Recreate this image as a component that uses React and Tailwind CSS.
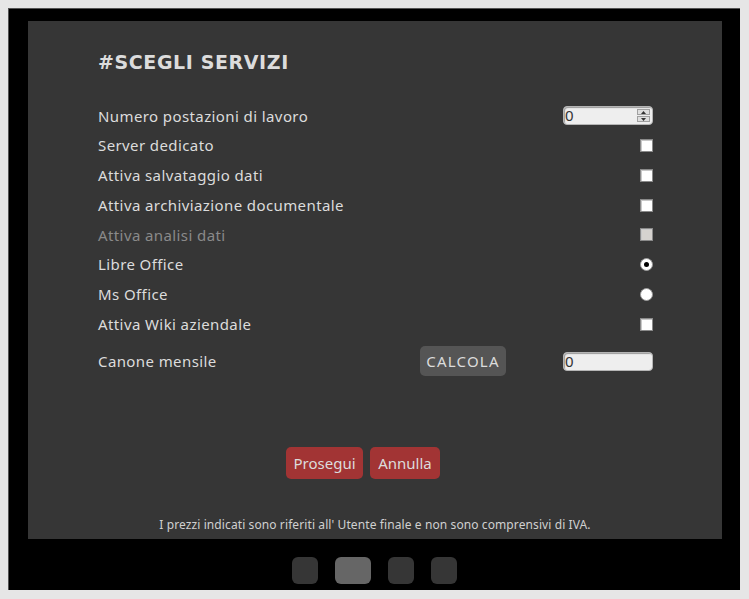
import React from 'react'

const ROWS = [
  { label: 'Numero postazioni di lavoro', type: 'number' },
  { label: 'Server dedicato', type: 'check' },
  { label: 'Attiva salvataggio dati', type: 'check' },
  { label: 'Attiva archiviazione documentale', type: 'check' },
  { label: 'Attiva analisi dati', type: 'check', disabled: true },
  { label: 'Libre Office', type: 'radio', checked: true },
  { label: 'Ms Office', type: 'radio' },
  { label: 'Attiva Wiki aziendale', type: 'check' },
]

function Checkbox({ disabled }) {
  return (
    <span
      className={`block w-[13px] h-[13px] border border-[#8a8a8a] ${
        disabled ? 'bg-[#d6d3cf]' : 'bg-white'
      } shadow-[inset_1px_1px_0_#c8c8c8]`}
    />
  )
}

function Radio({ checked }) {
  return (
    <span className="flex items-center justify-center w-[13px] h-[13px] rounded-full bg-white border border-[#9a9a9a]">
      {checked && <span className="block w-[5px] h-[5px] rounded-full bg-black" />}
    </span>
  )
}

function NumberBox({ spinner }) {
  return (
    <div className="relative w-[90px] h-[19px] bg-[#eeeeee] rounded-[4px] border border-[#b5b5b5] shadow-[inset_1px_1px_1px_#9a9a9a] flex items-center pl-[1px]">
      <span className="text-[15px] leading-none text-[#333]">0</span>
      {spinner && (
        <div className="absolute right-[2px] top-[2px] w-[13px] h-[13px] flex flex-col gap-[1px]">
          <div className="flex-1 bg-[#dedede] border border-[#a0a0a0] flex items-center justify-center">
            <svg width="5" height="3" viewBox="0 0 5 3"><path d="M0 3 L2.5 0 L5 3 Z" fill="#333" /></svg>
          </div>
          <div className="flex-1 bg-[#dedede] border border-[#a0a0a0] flex items-center justify-center">
            <svg width="5" height="3" viewBox="0 0 5 3"><path d="M0 0 L2.5 3 L5 0 Z" fill="#333" /></svg>
          </div>
        </div>
      )}
    </div>
  )
}

export default function App() {
  return (
    <div className="w-[749px] h-[599px] bg-[#e6e6e6] p-[8px] font-['Noto_Sans',sans-serif] overflow-hidden">
      <div className="w-[732px] h-[582px] bg-black border-l border-t border-[#555] flex flex-col">
        <div className="mt-[12px] ml-[19px] w-[694px] h-[518px] bg-[#363636] flex flex-col pl-[70px] pr-[69px]">
          <h1 className="mt-[27px] h-[28px] leading-[28px] text-[19px] tracking-[0.6px] font-bold text-[#dcdcdc] font-['DejaVu_Sans',sans-serif]">
            #SCEGLI SERVIZI
          </h1>

          <div className="mt-[25px] flex flex-col">
            {ROWS.map((r) => (
              <div key={r.label} className="h-[29.75px] flex items-center justify-between">
                <span
                  className={`text-[15px] tracking-[0.4px] ${r.disabled ? 'text-[#8a8a8a]' : 'text-[#dcdcdc]'}`}
                >
                  {r.label}
                </span>
                {r.type === 'number' && <NumberBox spinner />}
                {r.type === 'check' && <Checkbox disabled={r.disabled} />}
                {r.type === 'radio' && <Radio checked={r.checked} />}
              </div>
            ))}
          </div>

          <div className="mt-[7px] h-[30px] flex items-center">
            <span className="text-[15px] tracking-[0.4px] text-[#dcdcdc] w-[322px]">Canone mensile</span>
            <button className="w-[86px] h-[30px] rounded-[5px] bg-[#555555] text-[15px] text-[#dcdcdc] tracking-[1.2px]">
              CALCOLA
            </button>
            <div className="ml-auto">
              <NumberBox />
            </div>
          </div>

          <div className="mt-[71px] ml-[188px] flex gap-[7px]">
            <button className="w-[77px] h-[32px] rounded-[5px] bg-[#a23434] text-[15px] text-[#dcdcdc]">
              Prosegui
            </button>
            <button className="w-[70px] h-[32px] rounded-[5px] bg-[#a23434] text-[15px] text-[#dcdcdc]">
              Annulla
            </button>
          </div>

          <p className="mt-auto mb-[5px] -ml-[70px] -mr-[69px] text-center text-[12px] tracking-[0.1px] text-[#d0d0d0]">
            I prezzi indicati sono riferiti all' Utente finale e non sono comprensivi di IVA.
          </p>
        </div>

        <div className="mt-[18px] ml-[283px] flex items-start gap-[17px]">
          <span className="block w-[26px] h-[27px] rounded-[6px] bg-[#363636]" />
          <span className="block w-[36px] h-[27px] rounded-[6px] bg-[#666666]" />
          <span className="block w-[26px] h-[27px] rounded-[6px] bg-[#363636]" />
          <span className="block w-[26px] h-[27px] rounded-[6px] bg-[#363636]" />
        </div>
      </div>
    </div>
  )
}
